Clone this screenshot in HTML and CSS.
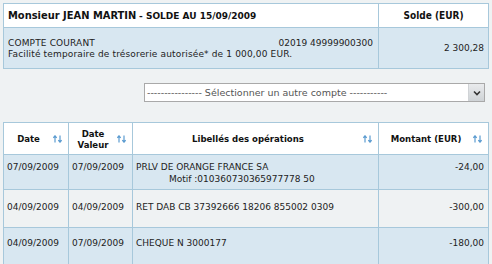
FILE: index.html
```html
<!DOCTYPE html>
<html lang="fr">
<head>
<meta charset="utf-8">
<title>Compte</title>
<link rel="stylesheet" href="styles.css">
</head>
<body>
<div class="page">
  <table class="summary">
    <tr class="head">
      <th class="title"><span class="name">Monsieur JEAN MARTIN</span> <span class="date">- SOLDE AU 15/09/2009</span></th>
      <th class="solde-h">Solde (EUR)</th>
    </tr>
    <tr class="body">
      <td class="acct">
        <div class="line1"><span>COMPTE COURANT</span><span>02019 49999900300</span></div>
        <div>Facilité temporaire de trésorerie autorisée* de 1 000,00 EUR.</div>
      </td>
      <td class="solde">2 300,28</td>
    </tr>
  </table>

  <div class="selrow">
    <div class="select">
      <span class="sel-text">---------------- Sélectionner un autre compte -----------</span>
      <span class="sel-btn"><svg width="8" height="6" viewBox="0 0 8 6"><path d="M1 1.5 L4 4.5 L7 1.5" fill="none" stroke="#333" stroke-width="1.6"/></svg></span>
    </div>
  </div>

  <table class="ops">
    <tr class="head">
      <th class="c-date"><div class="th"><span class="lbl">Date</span><svg class="sort" width="9" height="8" viewBox="0 0 9 8"><path d="M2 7.5V1M0.3 2.8L2 0.8L3.7 2.8M7 0.5V7M5.3 5.2L7 7.2L8.7 5.2" fill="none" stroke="#5a9bd0" stroke-width="1.2"/></svg></div></th>
      <th class="c-val"><div class="th"><span class="lbl">Date<br>Valeur</span><svg class="sort" width="9" height="8" viewBox="0 0 9 8"><path d="M2 7.5V1M0.3 2.8L2 0.8L3.7 2.8M7 0.5V7M5.3 5.2L7 7.2L8.7 5.2" fill="none" stroke="#5a9bd0" stroke-width="1.2"/></svg></div></th>
      <th class="c-lib"><div class="th"><span class="lbl">Libellés des opérations</span><svg class="sort" width="9" height="8" viewBox="0 0 9 8"><path d="M2 7.5V1M0.3 2.8L2 0.8L3.7 2.8M7 0.5V7M5.3 5.2L7 7.2L8.7 5.2" fill="none" stroke="#5a9bd0" stroke-width="1.2"/></svg></div></th>
      <th class="c-mnt"><div class="th"><span class="lbl">Montant (EUR)</span><svg class="sort" width="9" height="8" viewBox="0 0 9 8"><path d="M2 7.5V1M0.3 2.8L2 0.8L3.7 2.8M7 0.5V7M5.3 5.2L7 7.2L8.7 5.2" fill="none" stroke="#5a9bd0" stroke-width="1.2"/></svg></div></th>
    </tr>
    <tr class="r1 blue">
      <td>07/09/2009</td>
      <td>07/09/2009</td>
      <td class="lib">PRLV DE ORANGE FRANCE SA<div class="motif">Motif :010360730365977778 50</div></td>
      <td class="amt">-24,00</td>
    </tr>
    <tr class="r2">
      <td>04/09/2009</td>
      <td>04/09/2009</td>
      <td class="lib">RET DAB CB 37392666 18206 855002 0309</td>
      <td class="amt">-300,00</td>
    </tr>
    <tr class="r3 blue">
      <td>04/09/2009</td>
      <td>07/09/2009</td>
      <td class="lib">CHEQUE N 3000177</td>
      <td class="amt">-180,00</td>
    </tr>
  </table>
</div>
</body>
</html>
```

FILE: styles.css
```css
html, body {
  margin: 0;
  padding: 0;
  background: #eff2f3;
}
body {
  font-family: "DejaVu Sans", Verdana, sans-serif;
  font-size: 9px;
  color: #222;
  overflow: hidden;
}
.page {
  padding: 3px 3px 0 3px;
}
table {
  border-collapse: collapse;
  width: 486px;
  table-layout: fixed;
}
th, td {
  border: 1px solid #a7c8db;
  padding: 0;
}
th {
  font-family: "DejaVu Sans Condensed", "DejaVu Sans", sans-serif;
  font-weight: bold;
  color: #111;
}
.summary .head {
  background: #fff;
  height: 24px;
}
.summary .title {
  text-align: left;
  padding-left: 4px;
  white-space: nowrap;
}
.summary .name {
  font-size: 11px;
}
.summary .date {
  font-family: "DejaVu Sans", sans-serif;
  font-size: 9px;
}
.summary .solde-h {
  width: 109px;
  font-size: 10px;
}
.summary .body {
  background: #d8e7f1;
  height: 41px;
}
.acct {
  padding: 2px 5px 0 4px;
  line-height: 11px;
  letter-spacing: 0.15px;
}
.line1 {
  display: flex;
  justify-content: space-between;
}
.line1 span:last-child {
  letter-spacing: 0;
}
.solde {
  text-align: right;
  padding-right: 4px;
}
.selrow {
  display: flex;
  justify-content: flex-end;
  padding: 14px 4px 0 0;
  height: 20px;
}
.select {
  width: 339px;
  height: 17px;
  border: 1px solid #a9a9a9;
  background: #fff;
  display: flex;
  align-items: stretch;
}
.sel-text {
  flex: 1;
  color: #555;
  font-size: 9.5px;
  line-height: 17px;
  padding-left: 2px;
  white-space: nowrap;
  overflow: hidden;
}
.sel-btn {
  width: 15px;
  background: linear-gradient(#e9ebed, #cfd3d6);
  border-left: 1px solid #d0d3d6;
  display: flex;
  align-items: center;
  justify-content: center;
}
.ops {
  margin-top: 19px;
}
.ops .head {
  background: #fff;
  height: 32px;
}
.ops th {
  font-size: 9.5px;
  line-height: 11px;
}
.th {
  display: flex;
  align-items: center;
  padding-right: 6px;
}
.th .lbl {
  flex: 1;
  text-align: center;
}
.c-date { width: 64px; }
.c-val { width: 63px; }
.c-mnt { width: 109px; }
.ops td {
  padding-left: 3px;
  white-space: nowrap;
  vertical-align: top;
  line-height: 11px;
}
.blue { background: #d8e7f1; }
.r1 { height: 35px; }
.r2 { height: 38px; }
.r3 { height: 38px; }
.r1 td { padding-top: 7px; }
.r1 .lib { line-height: 12px; padding-top: 6px; }
.r2 td { padding-top: 12px; }
.r3 td { padding-top: 10px; }
.motif { padding-left: 33px; }
.ops td.amt {
  text-align: right;
  padding-right: 4px;
}
```
